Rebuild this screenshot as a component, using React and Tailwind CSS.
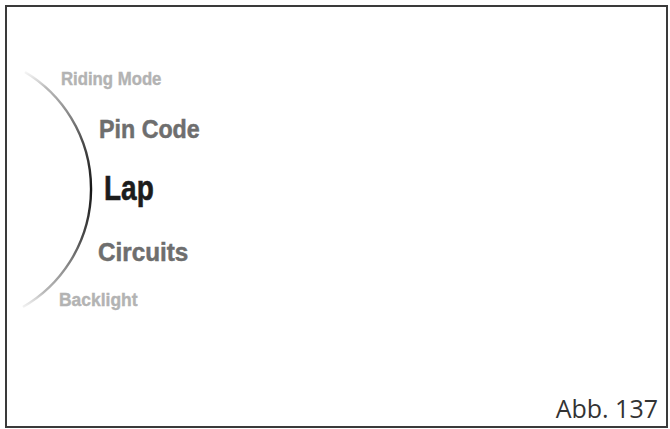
export default function App() {
  const menuFont = { fontFamily: '"Liberation Sans", Arial, sans-serif' };
  return (
    <div className="w-[670px] h-[429px] bg-white overflow-hidden">
      <div className="relative ml-[5px] mt-[5px] w-[663px] h-[423px] border-2 border-[#3a3a3a] flex flex-col">
        {/* selector arc on the left edge of the menu wheel */}
        <svg
          className="absolute left-0 top-0 pointer-events-none"
          width="120"
          height="320"
          viewBox="7 7 120 320"
        >
          <defs>
            <linearGradient id="arcShade" gradientUnits="userSpaceOnUse" x1="0" y1="68" x2="0" y2="312">
              <stop offset="0" stopColor="#c4c4c4" stopOpacity="0" />
              <stop offset="0.08" stopColor="#a8a8a8" stopOpacity="0.8" />
              <stop offset="0.3" stopColor="#4d4d4d" />
              <stop offset="0.5" stopColor="#151515" />
              <stop offset="0.7" stopColor="#4d4d4d" />
              <stop offset="0.92" stopColor="#a8a8a8" stopOpacity="0.8" />
              <stop offset="1" stopColor="#c4c4c4" stopOpacity="0" />
            </linearGradient>
          </defs>
          <path
            d="M 25 72 A 136.5 136.5 0 0 1 23 307"
            fill="none"
            stroke="url(#arcShade)"
            strokeWidth="2.4"
          />
        </svg>

        <div className="flex flex-col items-start pt-[63px]" style={menuFont}>
          <div className="ml-[54px] h-[18px] text-[18px] leading-[18px] font-bold text-[#b3b3b3] inline-block origin-left scale-x-[0.93] whitespace-nowrap [-webkit-text-stroke:0.4px_currentColor]">
            Riding Mode
          </div>
          <div className="ml-[92px] mt-[29px] h-[25px] text-[25px] leading-[25px] font-bold text-[#6e6e6e] inline-block origin-left scale-x-[0.93] whitespace-nowrap [-webkit-text-stroke:0.5px_currentColor]">
            Pin Code
          </div>
          <div className="ml-[97px] mt-[28px] h-[35px] text-[35px] leading-[35px] font-bold text-[#1c1c1c] inline-block origin-left scale-x-[0.8] whitespace-nowrap [-webkit-text-stroke:0.6px_currentColor]">
            Lap
          </div>
          <div className="ml-[91px] mt-[35px] h-[25px] text-[25px] leading-[25px] font-bold text-[#6e6e6e] inline-block origin-left scale-x-[0.97] whitespace-nowrap [-webkit-text-stroke:0.5px_currentColor]">
            Circuits
          </div>
          <div className="ml-[52px] mt-[26px] h-[18px] text-[18px] leading-[18px] font-bold text-[#b3b3b3] inline-block origin-left scale-x-[0.97] whitespace-nowrap [-webkit-text-stroke:0.4px_currentColor]">
            Backlight
          </div>
        </div>

        <div
          className="mt-auto self-end pr-[8px] pb-[5px] text-[25px] leading-[25px] text-[#333333]"
          style={{ fontFamily: '"Open Sans", sans-serif' }}
        >
          Abb. 137
        </div>
      </div>
    </div>
  );
}
